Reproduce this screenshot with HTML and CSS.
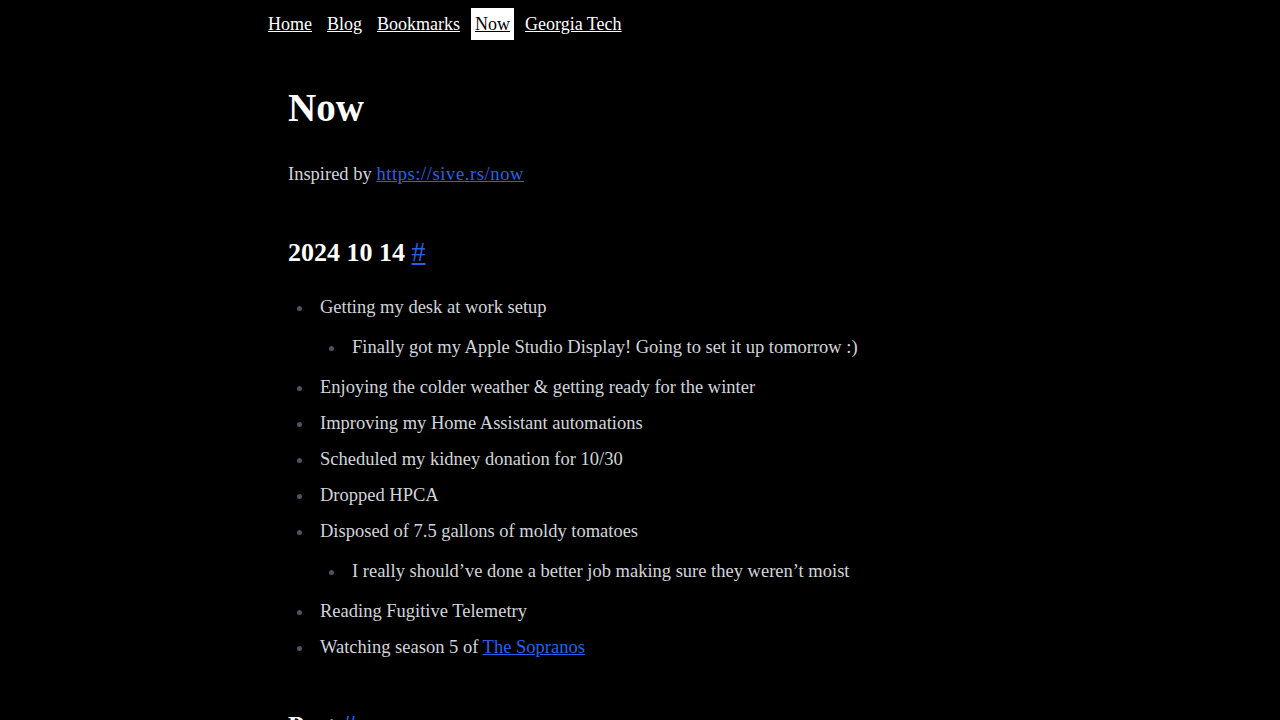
FILE: index.html
```html
<!DOCTYPE html>
<html lang="en">
<head>
<meta charset="utf-8">
<title>Now</title>
<link rel="stylesheet" href="styles.css">
</head>
<body>
<div class="container">
  <nav class="nav">
    <a href="#" class="nav-link">Home</a>
    <a href="#" class="nav-link">Blog</a>
    <a href="#" class="nav-link">Bookmarks</a>
    <a href="#" class="nav-link active">Now</a>
    <a href="#" class="nav-link">Georgia Tech</a>
  </nav>
  <main class="prose">
    <h1>Now</h1>
    <p>Inspired by <a href="#">https://sive.rs/now</a></p>
    <h2>2024 10 14 <a href="#" class="anchor">#</a></h2>
    <ul>
      <li>Getting my desk at work setup
        <ul>
          <li>Finally got my Apple Studio Display! Going to set it up tomorrow :)</li>
        </ul>
      </li>
      <li>Enjoying the colder weather &amp; getting ready for the winter</li>
      <li>Improving my Home Assistant automations</li>
      <li>Scheduled my kidney donation for 10/30</li>
      <li>Dropped HPCA</li>
      <li>Disposed of 7.5 gallons of moldy tomatoes
        <ul>
          <li>I really should’ve done a better job making sure they weren’t moist</li>
        </ul>
      </li>
      <li>Reading Fugitive Telemetry</li>
      <li>Watching season 5 of <a href="#">The Sopranos</a></li>
    </ul>
    <h2>Past <a href="#" class="anchor">#</a></h2>
    <ul>
      <li>Placeholder</li>
    </ul>
  </main>
</div>
</body>
</html>
```

FILE: styles.css
```css
html, body {
  margin: 0;
  padding: 0;
  background: #000;
}
body {
  font-family: "Liberation Serif", serif;
  color: #d1d5db;
  font-size: 18.5px;
}
.container {
  max-width: 768px;
  margin: 0 auto;
}
.nav {
  display: flex;
  gap: 7px;
  padding: 8px 8px 0;
  height: 32px;
  font-size: 18px;
}
.nav-link {
  color: #fff;
  text-decoration: underline;
  padding: 4px;
  line-height: 25px;
}
.nav-link.active {
  background: #fff;
  color: #000;
}
.prose {
  padding: 48px 32px 0;
}
.prose h1 {
  margin: 0 0 32px;
  font-size: 39px;
  line-height: 40px;
  font-weight: 800;
  color: #fff;
}
.prose p {
  margin: 0;
  line-height: 28px;
}
.prose p a {
  letter-spacing: 0.6px;
}
.prose a {
  color: #2563eb;
  text-decoration: underline;
}
.prose h2 {
  margin: 48px 0 24px;
  font-size: 26px;
  line-height: 32px;
  font-weight: 700;
  color: #fff;
}
.prose h2 .anchor {
  font-weight: 400;
  font-size: 28px;
  margin-left: 0;
}
.prose ul {
  margin: 0 0 20px;
  padding-left: 26px;
  list-style-type: disc;
}
.prose li {
  margin: 8px 0;
  padding-left: 6px;
  line-height: 28px;
}
.prose li::marker {
  color: #4b5563;
}
.prose ul:first-of-type > li:first-child {
  margin-top: 0;
}
.prose li ul {
  margin: 12px 0;
  list-style-type: disc;
}
```
